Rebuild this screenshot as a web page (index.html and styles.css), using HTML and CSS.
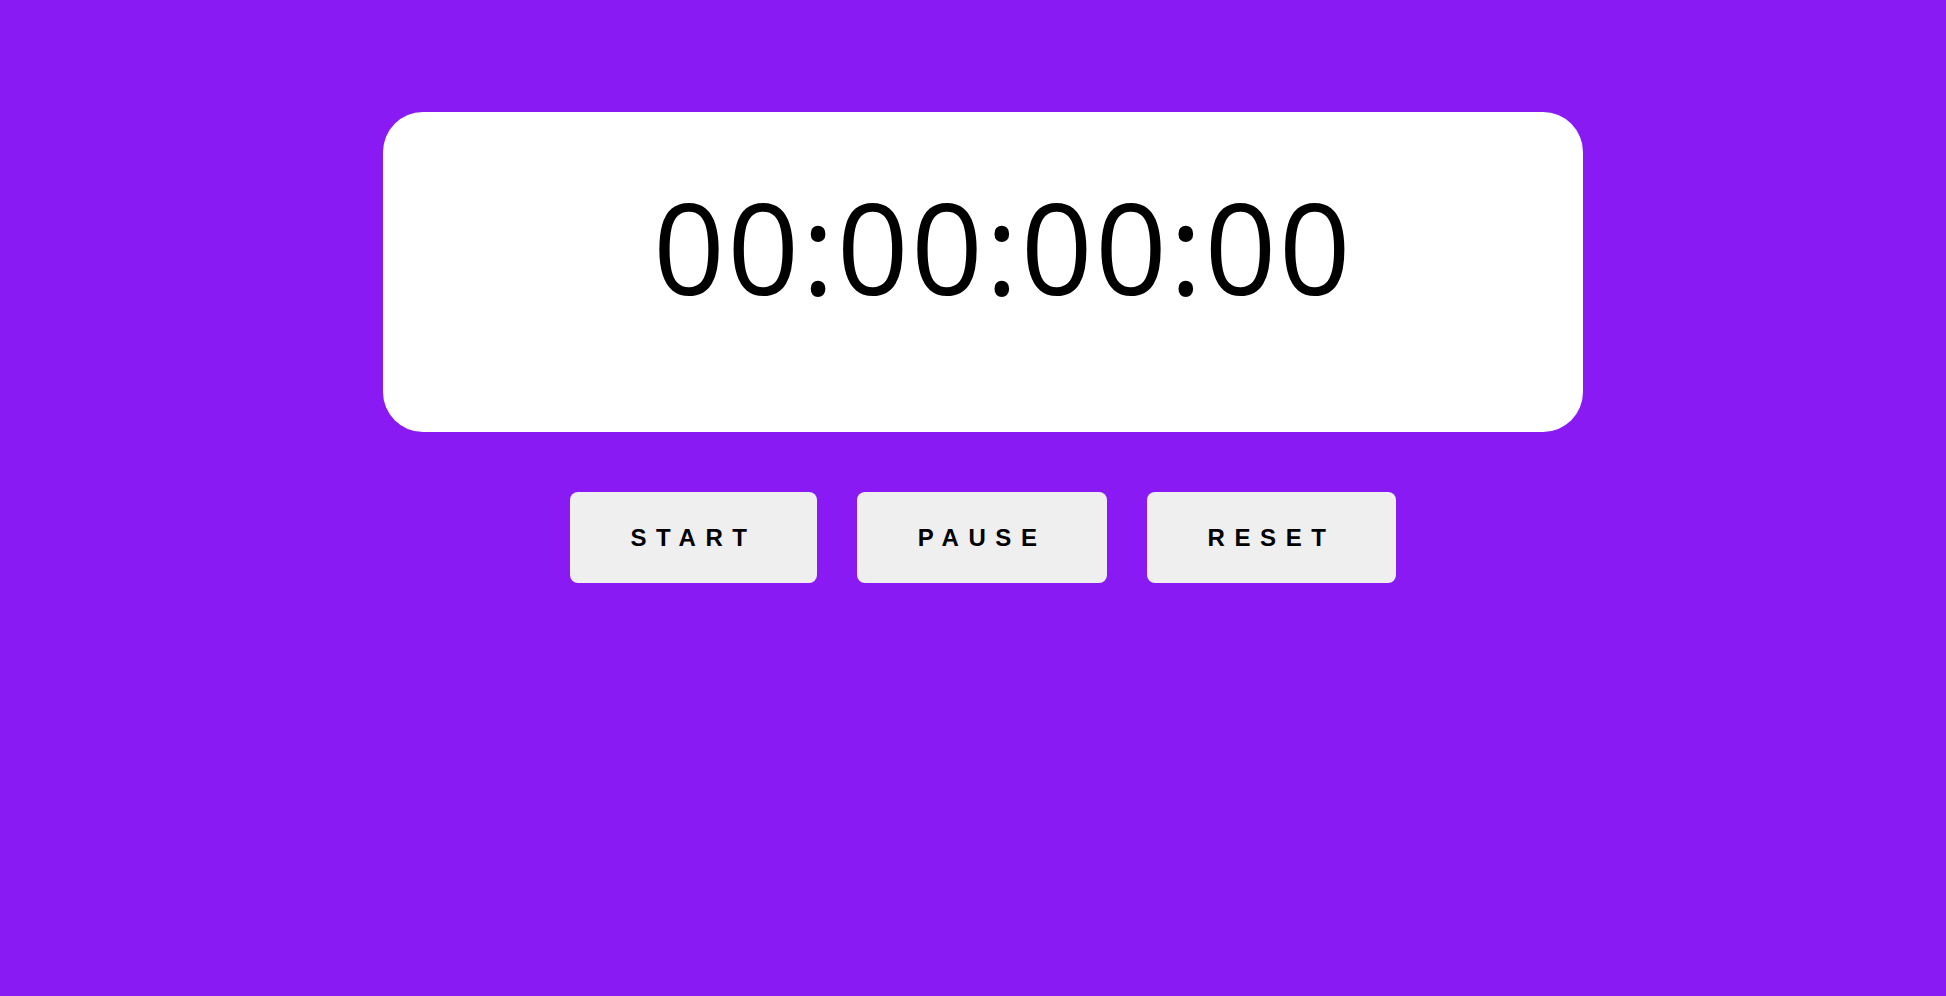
FILE: index.html
```html
<!DOCTYPE html>
<html lang="en">
<head>
<meta charset="utf-8">
<title>Stopwatch</title>
<link rel="stylesheet" href="styles.css">
</head>
<body>
<main class="app">
  <section class="display">
    <div class="time">00:00:00:00</div>
  </section>
  <div class="controls">
    <button class="btn">START</button>
    <button class="btn">PAUSE</button>
    <button class="btn">RESET</button>
  </div>
</main>
</body>
</html>
```
FILE: styles.css
```css
html, body {
  margin: 0;
  padding: 0;
}
body {
  background: #8a1af4;
  min-height: 996px;
  font-family: "Open Sans", "Noto Sans", sans-serif;
}
.app {
  padding: 112px 0 0 20px;
}
.display {
  width: 1200px;
  height: 320px;
  margin: 0 auto;
  box-sizing: border-box;
  background: #ffffff;
  border-radius: 40px;
  padding: 49px 0 0 40px;
  text-align: center;
}
.time {
  font-family: "Open Sans", "Noto Sans", sans-serif;
  font-size: 126px;
  font-weight: 500;
  letter-spacing: 2.2px;
  line-height: 1.362;
  color: #000;
}
.controls {
  display: flex;
  justify-content: center;
  gap: 40px;
  margin-top: 60px;
}
.btn {
  height: 91px;
  padding: 0 60.5px;
  border: none;
  border-radius: 8px;
  background: #efefef;
  color: #000;
  font-family: "Liberation Sans", Arial, sans-serif;
  font-weight: 700;
  font-size: 24px;
  letter-spacing: 0.4em;
  cursor: pointer;
}
```
